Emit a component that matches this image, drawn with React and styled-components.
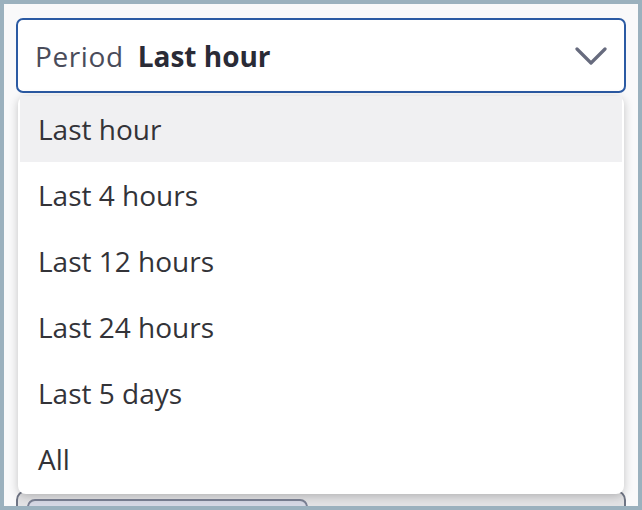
import React, { useState } from "react";
import styled, { createGlobalStyle } from "styled-components";

const GlobalStyle = createGlobalStyle`
  html, body {
    margin: 0;
    padding: 0;
  }
  body {
    font-family: "Open Sans", "Liberation Sans", sans-serif;
  }
`;

const Frame = styled.div`
  box-sizing: border-box;
  width: 642px;
  height: 510px;
  border: 4px solid #9bb1be;
  background: #f9f9fa;
  padding: 14px 12px 0;
  overflow: hidden;
`;

const Field = styled.div`
  position: relative;
`;

const SelectBox = styled.button`
  box-sizing: border-box;
  width: 100%;
  height: 75px;
  display: flex;
  align-items: center;
  gap: 14px;
  padding: 0 17px 0 17px;
  background: #fff;
  border: 2px solid #2b5aa3;
  border-radius: 7px;
  font-family: inherit;
  cursor: pointer;
  text-align: left;
`;

const Label = styled.span`
  font-size: 28px;
  letter-spacing: 0.6px;
  color: #4a4c5a;
`;

const Value = styled.span`
  flex: 1;
  font-size: 28px;
  font-weight: 700;
  color: #2a2b36;
`;

const Chevron = styled.svg`
  width: 32px;
  height: 20px;
  flex-shrink: 0;
`;

const Menu = styled.ul`
  position: absolute;
  top: 78px;
  left: 2px;
  right: 2px;
  margin: 0;
  padding: 0 2px 2px;
  list-style: none;
  background: #fff;
  border-radius: 8px;
  box-shadow: 0 2px 10px rgba(0, 0, 0, 0.22);
  z-index: 2;
`;

const Option = styled.li`
  height: 66px;
  display: flex;
  align-items: center;
  padding: 0 18px;
  font-size: 28px;
  color: #333338;
  background: ${(p) => (p.$active ? "#f0f0f2" : "transparent")};
  cursor: pointer;
`;

const Card = styled.div`
  margin-top: 397px;
  height: 80px;
  border: 2px solid #6f7585;
  border-radius: 10px;
  background: #e2e2e4;
  padding: 7px 9px;
`;

const Chip = styled.div`
  width: 277px;
  height: 40px;
  border: 2px solid #7b8194;
  border-radius: 8px;
  background: #d6d8e4;
`;

const options = [
  "Last hour",
  "Last 4 hours",
  "Last 12 hours",
  "Last 24 hours",
  "Last 5 days",
  "All",
];

export default function App() {
  const [period, setPeriod] = useState("Last hour");

  return (
    <>
      <GlobalStyle />
      <Frame>
        <Field>
          <SelectBox>
            <Label>Period</Label>
            <Value>{period}</Value>
            <Chevron viewBox="0 0 32 20">
              <path
                d="M2 3 L16 17 L30 3"
                fill="none"
                stroke="#676b7e"
                strokeWidth="3.2"
                strokeLinecap="round"
                strokeLinejoin="round"
              />
            </Chevron>
          </SelectBox>
          <Menu>
            {options.map((o) => (
              <Option key={o} $active={o === period} onClick={() => setPeriod(o)}>
                {o}
              </Option>
            ))}
          </Menu>
        </Field>
        <Card>
          <Chip />
        </Card>
      </Frame>
    </>
  );
}
